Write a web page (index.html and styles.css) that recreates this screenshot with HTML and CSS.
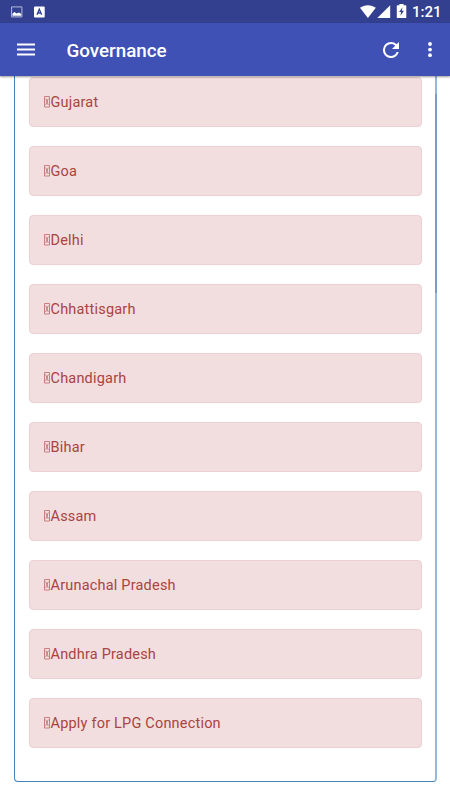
FILE: index.html
```html
<!DOCTYPE html>
<html lang="en">
<head>
  <meta charset="UTF-8">
  <meta name="viewport" content="width=device-width, initial-scale=1.0">
  <title>Governance</title>
  <link rel="stylesheet" href="styles.css">
</head>
<body>
  <svg class="defs" width="0" height="0">
    <symbol id="tofu" viewBox="0 0 6 12">
      <path d="M.5.5h5v10.5h-5zM1.7 2.5l2.6 6.5M4.3 2.5l-2.6 6.5" fill="none" stroke="currentColor" stroke-width=".8"/>
    </symbol>
  </svg>

  <div class="statusbar">
    <svg class="picture" width="12" height="12" viewBox="0 0 12 12">
      <path d="M.6.9h10.3v10H.6z" fill="none" stroke="#b3bbdf" stroke-width="1"/>
      <path d="M1.5 9.8V7.4L3.6 6l1.8 1.6L8 6.5l2.2 1.4v1.9z" fill="#fff"/>
    </svg>
    <svg class="letter" width="11" height="12" viewBox="0 0 11 12">
      <rect x="0" y=".4" width="10.7" height="11" rx="1" fill="#fff"/>
      <path d="M3 8.8l2.3-5.6 2.4 5.6M3.9 7h2.9" fill="none" stroke="#303f9f" stroke-width="1.3"/>
    </svg>
    <svg class="signals" width="48" height="16" viewBox="0 0 48 16">
      <path d="M0 3.7C4.6.3 11.2.3 15.8 3.7L7.9 14z" fill="#fff"/>
      <path d="M17.3 14L30.2 1.2V14z" fill="#fff"/>
      <path d="M37.4 1.3h2V.1h4.2v1.2h2.1q.6 0 .6.6v11.5q0 .6-.6.6h-8.3q-.6 0-.6-.6V1.9q0-.6.6-.6z" fill="#fff"/>
      <path d="M42.5 3.2l-3.4 4.9h2l-.7 3.6 3.6-5h-2.2z" fill="#303f8f"/>
    </svg>
    <span class="clock">1:21</span>
  </div>

  <div class="toolbar">
    <svg class="menu" width="18" height="13" viewBox="0 0 18 13">
      <path d="M0 1.5h18M0 6.5h18M0 11.5h18" stroke="#fff" stroke-width="2"/>
    </svg>
    <h1>Governance</h1>
    <svg class="refresh" width="16" height="16" viewBox="4 4 16 16">
      <path d="M17.65 6.35A7.958 7.958 0 0 0 12 4a8 8 0 1 0 7.73 10h-2.08A6 6 0 1 1 12 6c1.66 0 3.14.69 4.22 1.78L13 11h7V4z" fill="#fff"/>
    </svg>
    <svg class="more" width="4" height="16" viewBox="0 0 4 16">
      <g fill="#fff"><circle cx="2" cy="2" r="1.9"/><circle cx="2" cy="7.6" r="1.9"/><circle cx="2" cy="13.2" r="1.9"/></g>
    </svg>
  </div>

  <div class="content">
    <div class="panel">
      <div class="alert"><svg><use href="#tofu"/></svg>Gujarat</div>
      <div class="alert"><svg><use href="#tofu"/></svg>Goa</div>
      <div class="alert"><svg><use href="#tofu"/></svg>Delhi</div>
      <div class="alert"><svg><use href="#tofu"/></svg>Chhattisgarh</div>
      <div class="alert"><svg><use href="#tofu"/></svg>Chandigarh</div>
      <div class="alert"><svg><use href="#tofu"/></svg>Bihar</div>
      <div class="alert"><svg><use href="#tofu"/></svg>Assam</div>
      <div class="alert"><svg><use href="#tofu"/></svg>Arunachal Pradesh</div>
      <div class="alert"><svg><use href="#tofu"/></svg>Andhra Pradesh</div>
      <div class="alert"><svg><use href="#tofu"/></svg>Apply for LPG Connection</div>
    </div>
    <div class="scrollthumb"></div>
  </div>
</body>
</html>
```
FILE: styles.css
```css
* {
  box-sizing: border-box;
}

body {
  margin: 0;
  height: 100vh;
  overflow: hidden;
  background: #fff;
  font-family: Roboto, sans-serif;
  display: flex;
  flex-direction: column;
}

.defs {
  position: absolute;
}

.statusbar {
  flex: none;
  height: 23px;
  background: #33408f;
  color: #fff;
  display: flex;
  align-items: center;
  padding: 0 8px 0 11px;
}

.picture,
.letter {
  margin-top: 1px;
}

.letter {
  margin-left: 11px;
}

.signals {
  margin-left: auto;
}

.clock {
  width: 30px;
  margin: 2px 0 0 4px;
  font-size: 15px;
  font-weight: 500;
  line-height: 21px;
}

.toolbar {
  flex: none;
  position: relative;
  z-index: 1;
  height: 53px;
  background: #3f51b5;
  box-shadow: 0 1px 2px rgba(0, 0, 0, 0.4);
  color: #fff;
  display: flex;
  align-items: center;
  padding: 0 18px 0 17px;
}

.menu {
  margin-top: -1px;
}

.toolbar h1 {
  margin: 3px auto 0 31.5px;
  font-size: 18.8px;
  font-weight: 500;
  line-height: 24px;
}

.more {
  margin-left: 29px;
  margin-top: 1px;
}

.content {
  flex: 1;
  position: relative;
  overflow: hidden;
  padding: 0 13px 0 14px;
}

.panel {
  height: 706px;
  padding: 1px 13px 0 14px;
  border: 1px solid #4484bd;
  border-top: 0;
  border-right: 2px solid #94b8d9;
  border-radius: 0 0 4px 4px;
}

.alert {
  height: 50px;
  margin-bottom: 19.04px;
  padding-left: 14px;
  border: 1px solid #ecd0d4;
  border-radius: 4px;
  background: #f2dede;
  color: #a94442;
  font-size: 14.5px;
  letter-spacing: 0.2px;
  display: flex;
  align-items: center;
}

.alert svg {
  width: 6px;
  height: 12px;
  margin-right: 0.5px;
  opacity: 0.75;
}

.scrollthumb {
  position: absolute;
  top: 18px;
  right: 13px;
  width: 2px;
  height: 199px;
  background: rgba(70, 110, 165, 0.35);
}
```
